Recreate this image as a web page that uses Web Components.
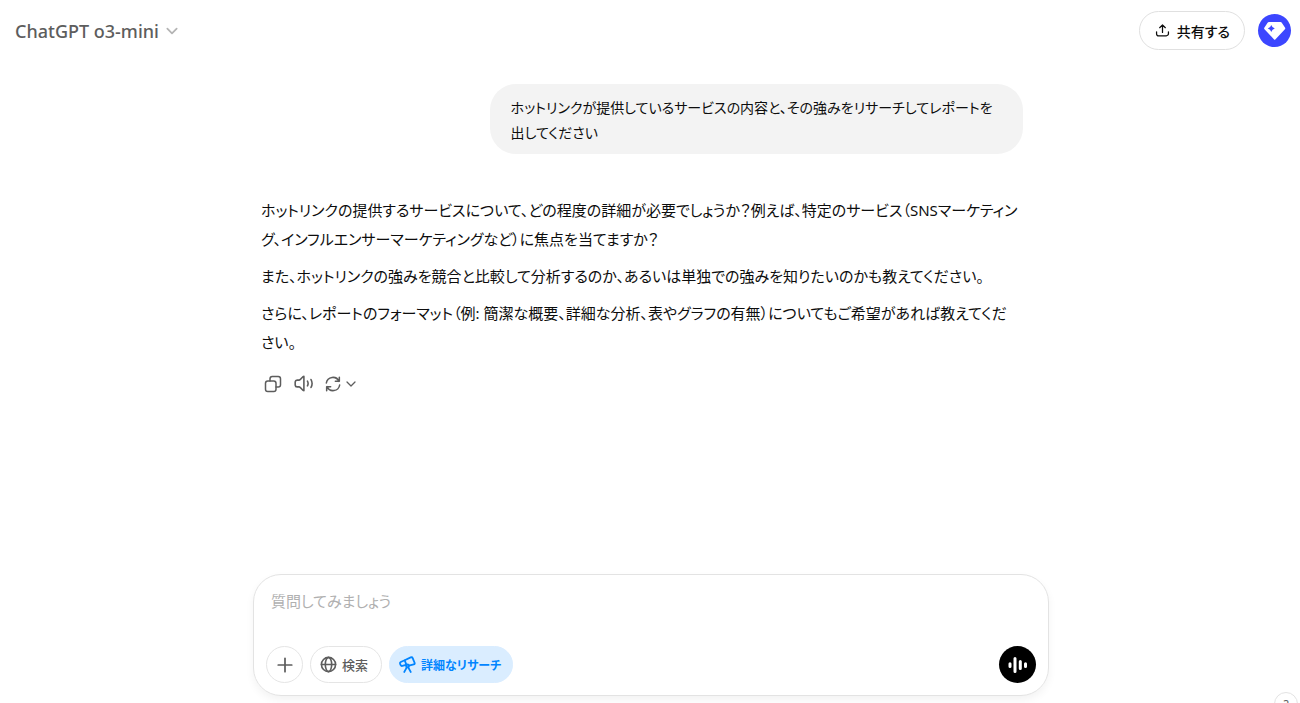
<!DOCTYPE html>
<html lang="ja">
<head>
<meta charset="utf-8">
<meta name="viewport" content="width=device-width, initial-scale=1">
<title>ChatGPT</title>
<style>
  body {
    margin: 0;
    background: #fff;
    color: #0d0d0d;
    font-family: "Noto Sans", "Noto Sans CJK JP", sans-serif;
    font-size: 16px;
    font-feature-settings: "palt", "kern";
  }

  .keep {
    white-space: nowrap;
  }
</style>
</head>
<body>
<chat-app>
  <chat-header slot="header" model="ChatGPT o3-mini"></chat-header>
  <user-message>ホットリンクが提供しているサービスの内容と、その強みをリサーチしてレポートを出してください</user-message>
  <assistant-message>
    <p>ホットリンクの提供するサービスについて、どの程度の詳細が必要でしょうか？例えば、特定のサービス（SNSマーケティング、インフルエンサーマーケティングなど）に焦点を当てますか？</p>
    <p>また、ホットリンクの強みを競合と比較して分析するのか、あるいは単独での強みを知りたいのかも教えてください。</p>
    <p>さらに、レポートのフォーマット（例: 簡潔な概要、詳細な分析、表やグラフの有無）についてもご希望があれば教えてくだ<span class="keep">さい。</span></p>
  </assistant-message>
  <chat-composer slot="footer" placeholder="質問してみましょう"></chat-composer>
</chat-app>

<script>
const ICONS = {
  chevron: `<path d="M4 8l8 8 8-8"/>`,
  share: `<path d="M12 15V3M7.500 7.500L12 3l4.500 4.500M2.500 14v3A3.500 3.500 0 0 0 6 20.500h12a3.500 3.500 0 0 0 3.500-3.500v-3"/>`,
  copy: `<rect x="2" y="8" width="14" height="14" rx="3"/><path d="M8 8V5a3 3 0 0 1 3-3h8a3 3 0 0 1 3 3v8a3 3 0 0 1-3 3h-3"/>`,
  speaker: `<path d="M12.500 3v18c-2 0-3.500-4.300-6-4.700H4A2.500 2.500 0 0 1 1.500 14v-4A2.500 2.500 0 0 1 4 7.700h2.500c2.500-.4 4-4.700 6-4.700z"/><path d="M17 9c1 1.800 1 4.200 0 6M21.500 7c1.700 3.100 1.700 6.900 0 10"/>`,
  refresh: `<path d="M2 10.500A10 10 0 0 1 21 8M21.500 2v6H15.500M22 13.500A10 10 0 0 1 3 16M2.500 22v-6H8.500"/>`,
  plus: `<path d="M12 3v18M3 12h18"/>`,
  globe: `<circle cx="12" cy="12" r="10"/><ellipse cx="12" cy="12" rx="4.500" ry="10"/><path d="M2 12h20"/>`,
  telescope: `<path d="M8 6l8.500-4q2-.8 2.800 1l2.700 6.500q.7 1.800-1.200 2.300L14 13.500M8 6l2.500 6.500M8 6L2.500 8.500Q1 9.300 1.600 11l.8 2q.7 1.400 2.300 1l5.300-1.500"/><circle cx="12" cy="14" r="2"/><path d="M11 16l-3.500 6.500M13 16l3.500 6.500"/>`,
};

const icon = (name, size, width = 2) => `
  <svg width="${size}" height="${size}" viewBox="0 0 24 24" fill="none" stroke="currentColor"
    stroke-width="${width}" stroke-linecap="round" stroke-linejoin="round" aria-hidden="true">${ICONS[name]}</svg>`;

const buttonStyles = /* css */`
  button {
    display: flex;
    align-items: center;
    justify-content: center;
    box-sizing: border-box;
    margin: 0;
    padding: 0;
    border: 0;
    background: none;
    color: inherit;
    font: inherit;
    font-feature-settings: inherit;
    cursor: pointer;
  }

  svg {
    display: block;
    flex: none;
  }
`;

class ChatApp extends HTMLElement {
  constructor() {
    super();
    this.attachShadow({ mode: "open" });
  }

  static get styles() {
    return /* css */`
      :host {
        display: flex;
        flex-direction: column;
        height: 100vh;
        overflow: hidden;
        position: relative;
      }

      main {
        flex: 1;
        min-height: 0;
        overflow: hidden;
        padding: 23px 28px 0 12px;
      }

      .thread {
        max-width: 762px;
        margin: 0 auto;
      }

      footer {
        padding: 0 12px 7px 14px;
      }
    `;
  }

  connectedCallback() {
    this.shadowRoot.innerHTML = /* html */`
    <style>${ChatApp.styles}</style>
    <slot name="header"></slot>
    <main>
      <div class="thread"><slot></slot></div>
    </main>
    <footer><slot name="footer"></slot></footer>
    <help-button></help-button>
    `;
  }
}

class ChatHeader extends HTMLElement {
  constructor() {
    super();
    this.attachShadow({ mode: "open" });
  }

  static get styles() {
    return /* css */`
      ${buttonStyles}

      :host {
        display: block;
      }

      header {
        display: flex;
        align-items: center;
        justify-content: space-between;
        height: 61px;
        padding: 0 9px 0 15px;
      }

      .model {
        gap: 6px;
        color: #5d5d5d;
        font-size: 18px;
        font-weight: 500;
      }

      .model svg {
        color: #b4b4b4;
      }

      .actions {
        display: flex;
        align-items: center;
        gap: 13px;
      }

      .share {
        gap: 7px;
        height: 39px;
        padding: 0 14px 0 15px;
        border: 1px solid #e0e0e0;
        border-radius: 20px;
        font-size: 14px;
        font-weight: 500;
      }

      .avatar {
        width: 33px;
        height: 33px;
        border-radius: 50%;
        background: #3c46ff;
      }
    `;
  }

  connectedCallback() {
    this.shadowRoot.innerHTML = /* html */`
    <style>${ChatHeader.styles}</style>
    <header>
      <button class="model" type="button">${this.getAttribute("model")} ${icon("chevron", 14, 3)}</button>
      <div class="actions">
        <button class="share" type="button">${icon("share", 15)}<span>共有する</span></button>
        <button class="avatar" type="button" aria-label="アカウント">
          <svg width="33" height="33" viewBox="0 0 33 33" aria-hidden="true">
            <path fill="#fff" d="M11 8h11.500q.8 0 1.300.7l3.300 5q.5.8-.2 1.500L17.300 25.500q-.6.700-1.200 0L6.500 15.200q-.7-.7-.2-1.500l3.300-5Q10.100 8 11 8z"/>
            <path fill="#3c46ff" d="M13.300 11q.8 2.700 3.500 3.500-2.700.8-3.500 3.500-.8-2.700-3.500-3.500 2.700-.8 3.500-3.500z"/>
          </svg>
        </button>
      </div>
    </header>
    `;
  }
}

class UserMessage extends HTMLElement {
  constructor() {
    super();
    this.attachShadow({ mode: "open" });
  }

  static get styles() {
    return /* css */`
      :host {
        display: flex;
        justify-content: flex-end;
        margin-bottom: 42px;
      }

      .bubble {
        box-sizing: border-box;
        max-width: 70%;
        padding: 11px 21px 9px;
        border-radius: 26px;
        background: #f3f3f3;
        font-size: 14px;
        line-height: 25px;
      }
    `;
  }

  connectedCallback() {
    this.shadowRoot.innerHTML = /* html */`
    <style>${UserMessage.styles}</style>
    <div class="bubble"><slot></slot></div>
    `;
  }
}

class AssistantMessage extends HTMLElement {
  constructor() {
    super();
    this.attachShadow({ mode: "open" });
  }

  static get styles() {
    return /* css */`
      ${buttonStyles}

      :host {
        display: block;
        font-size: 15px;
        line-height: 29px;
      }

      ::slotted(p) {
        margin: 0 0 8px;
      }

      .actions {
        display: flex;
        align-items: center;
        gap: 12px;
        padding: 9px 3px;
        color: #5d5d5d;
      }

      .retry {
        gap: 4px;
      }
    `;
  }

  connectedCallback() {
    this.shadowRoot.innerHTML = /* html */`
    <style>${AssistantMessage.styles}</style>
    <slot></slot>
    <div class="actions">
      <button type="button" aria-label="コピー">${icon("copy", 18)}</button>
      <button type="button" aria-label="音声で読み上げる">${icon("speaker", 19)}</button>
      <button class="retry" type="button" aria-label="再生成する">${icon("refresh", 16, 2.3)}${icon("chevron", 12, 2.5)}</button>
    </div>
    `;
  }
}

class ChatComposer extends HTMLElement {
  constructor() {
    super();
    this.attachShadow({ mode: "open" });
  }

  static get styles() {
    return /* css */`
      ${buttonStyles}

      :host {
        display: block;
        max-width: 796px;
        margin: 0 auto;
      }

      form {
        display: flex;
        flex-direction: column;
        gap: 31px;
        padding: 12px;
        border: 1px solid #e3e3e3;
        border-radius: 28px;
        box-shadow: 0 4px 8px rgba(0, 0, 0, 0.05);
      }

      textarea {
        display: block;
        height: 28px;
        padding: 0 5px;
        border: 0;
        outline: 0;
        resize: none;
        overflow: hidden;
        background: none;
        color: inherit;
        font: inherit;
        font-size: 15px;
        line-height: 28px;
        font-feature-settings: inherit;
      }

      textarea::placeholder {
        color: #b0b0b0;
      }

      .tools {
        display: flex;
        gap: 7px;
      }

      .tools button {
        gap: 5px;
        height: 37px;
        padding: 0 13px 0 9px;
        border: 1px solid #e5e5e5;
        border-radius: 19px;
        color: #5d5d5d;
        font-size: 13px;
        font-weight: 500;
      }

      .tools .add {
        width: 37px;
        padding: 0;
      }

      .tools .research {
        padding-right: 11px;
        border-color: #daedff;
        background: #daedff;
        color: #0285ff;
        font-size: 12px;
        font-weight: 600;
      }

      .tools .voice {
        width: 37px;
        margin-left: auto;
        padding: 0;
        border: 0;
        background: #000;
        color: #fff;
      }
    `;
  }

  connectedCallback() {
    this.shadowRoot.innerHTML = /* html */`
    <style>${ChatComposer.styles}</style>
    <form>
      <textarea rows="1" aria-label="メッセージ" placeholder="${this.getAttribute("placeholder")}"></textarea>
      <div class="tools">
        <button class="add" type="button" aria-label="追加">${icon("plus", 18, 2.3)}</button>
        <button type="button">${icon("globe", 17, 2.3)}<span>検索</span></button>
        <button class="research" type="button" aria-pressed="true">${icon("telescope", 17, 2.6)}<span>詳細なリサーチ</span></button>
        <button class="voice" type="button" aria-label="音声モード">
          <svg width="20" height="20" viewBox="0 0 20 20" stroke="#fff" stroke-width="3" stroke-linecap="round" aria-hidden="true">
            <path d="M2 8.800v2.600M7 3.500v13M12.300 6.500v7M17.500 8.800v2.600"/>
          </svg>
        </button>
      </div>
    </form>
    `;
  }
}

class HelpButton extends HTMLElement {
  constructor() {
    super();
    this.attachShadow({ mode: "open" });
  }

  static get styles() {
    return /* css */`
      ${buttonStyles}

      :host {
        display: block;
        position: absolute;
        right: 2px;
        bottom: -13px;
      }

      button {
        width: 24px;
        height: 24px;
        border: 1px solid #e3e3e3;
        border-radius: 50%;
        color: #5d5d5d;
        font-size: 12px;
      }
    `;
  }

  connectedCallback() {
    this.shadowRoot.innerHTML = /* html */`
    <style>${HelpButton.styles}</style>
    <button type="button">?</button>
    `;
  }
}

customElements.define("chat-app", ChatApp);
customElements.define("chat-header", ChatHeader);
customElements.define("user-message", UserMessage);
customElements.define("assistant-message", AssistantMessage);
customElements.define("chat-composer", ChatComposer);
customElements.define("help-button", HelpButton);
</script>
</body>
</html>
